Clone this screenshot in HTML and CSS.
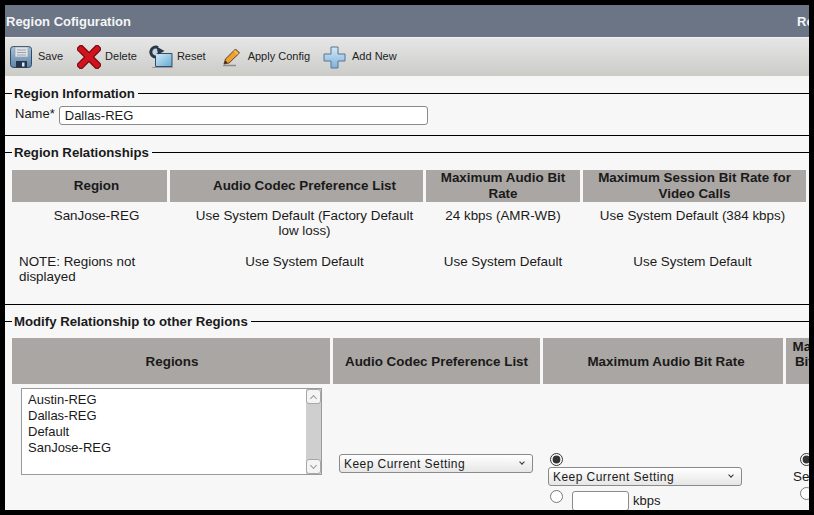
FILE: index.html
```html
<!DOCTYPE html>
<html lang="en">

<head>
    <meta charset="UTF-8">
    <meta name="viewport" content="width=device-width, initial-scale=1.0">
    <title>Region Configuration</title>
    <link rel="stylesheet" href="styles.css">
</head>

<body>

    <div class="frame">
        <div class="title-bar">
            <span class="page-title">Region Cofiguration</span>
            <span class="page-link">Related Links</span>
        </div>

        <div class="toolbar">
            <a class="tool tool-save">
                <svg width="22" height="22" viewBox="0 0 22 22">
                    <defs>
                        <linearGradient id="diskBody" x1="0" y1="0" x2="0" y2="1">
                            <stop offset="0" stop-color="#a9c1d8" />
                            <stop offset="1" stop-color="#5f84a8" />
                        </linearGradient>
                    </defs>
                    <rect x="0.5" y="0.5" width="21" height="21" rx="3" fill="url(#diskBody)" stroke="#2f4a66" />
                    <rect x="5" y="1" width="13" height="10" fill="#dfe2e5" stroke="#8c99a6" stroke-width="0.6" />
                    <path d="M7 4h9M7 6.500h9M7 9h9" stroke="#9aa5b0" stroke-width="1" />
                    <rect x="6" y="15" width="11" height="6.500" fill="#26364a" />
                    <rect x="12" y="16.500" width="2.500" height="4" fill="#dfe6ec" />
                </svg>
                <span>Save</span>
            </a>
            <a class="tool tool-delete">
                <svg width="24" height="24" viewBox="0 0 24 24">
                    <path d="M4 4L20 20M20 4L4 20" stroke="#7d0a12" stroke-width="7.500" stroke-linecap="square" />
                    <path d="M4 4L20 20M20 4L4 20" stroke="#cf1420" stroke-width="5" stroke-linecap="square" />
                </svg>
                <span>Delete</span>
            </a>
            <a class="tool tool-reset">
                <svg width="24" height="24" viewBox="0 0 24 24">
                    <defs>
                        <linearGradient id="resetBox" x1="0" y1="0" x2="1" y2="1">
                            <stop offset="0" stop-color="#d3ecf8" />
                            <stop offset="1" stop-color="#62a9d6" />
                        </linearGradient>
                    </defs>
                    <path d="M3 22.500H24" stroke="#9a9a9a" stroke-width="1" />
                    <path d="M6.500 8.500H23V21.500H6.500Z" fill="url(#resetBox)" stroke="#3a4d60" />
                    <path d="M9 2.500A5 5 0 1 0 7 12" fill="#c8d2da" stroke="#26384a" stroke-width="3" />
                    <path d="M7.500 1.500L15.500 6L9 9.500Z" fill="#26384a" />
                </svg>
                <span>Reset</span>
            </a>
            <a class="tool tool-apply">
                <svg width="20" height="20" viewBox="0 0 20 20">
                    <path d="M1 18.500H14" stroke="#8d8d8d" stroke-width="1.500" />
                    <path d="M2 17L3.500 12L13.500 2L17.500 6L7 16Z" fill="#f0a030" stroke="#5b4320" stroke-width="1" />
                    <path d="M12 3.500L16 7.500" stroke="#fbe0a0" stroke-width="1" />
                    <path d="M2 17L3.500 13.500L5.500 15.500Z" fill="#3a2a14" />
                </svg>
                <span>Apply Config</span>
            </a>
            <a class="tool tool-add">
                <svg width="23" height="23" viewBox="0 0 23 23">
                    <defs>
                        <linearGradient id="plusFill" x1="0" y1="0" x2="0" y2="1">
                            <stop offset="0" stop-color="#d4e8f6" />
                            <stop offset="1" stop-color="#7fb2dc" />
                        </linearGradient>
                    </defs>
                    <path d="M8 1H15V8H22V15H15V22H8V15H1V8H8Z" fill="url(#plusFill)" stroke="#5a7590" />
                </svg>
                <span>Add New</span>
            </a>
        </div>

        <div class="content">
            <section class="block block-info">
                <fieldset>
                    <legend>Region Information</legend>
                    <div class="name-row">
                        <label for="regionName">Name*</label>
                        <input id="regionName" class="name-input" type="text" value="Dallas-REG">
                    </div>
                </fieldset>
            </section>

            <section class="block block-rel">
                <fieldset>
                    <legend>Region Relationships</legend>
                    <table class="grid grid-rel">
                        <colgroup>
                            <col class="rel-a">
                            <col class="rel-b">
                            <col class="rel-c">
                            <col class="rel-d">
                        </colgroup>
                        <tr>
                            <th class="th-region">Region</th>
                            <th class="th-codec">Audio Codec Preference List</th>
                            <th>Maximum Audio Bit Rate</th>
                            <th>Maximum Session Bit Rate for Video Calls</th>
                        </tr>
                        <tr>
                            <td class="td-region">SanJose-REG</td>
                            <td class="td-codec">Use System Default (Factory Default low loss)</td>
                            <td>24 kbps (AMR-WB)</td>
                            <td class="td-session">Use System Default (384 kbps)</td>
                        </tr>
                        <tr>
                            <td class="note">NOTE: Regions not displayed</td>
                            <td class="td-codec">Use System Default</td>
                            <td>Use System Default</td>
                            <td class="td-session">Use System Default</td>
                        </tr>
                    </table>
                </fieldset>
            </section>

            <section class="block-modify">
                <fieldset>
                    <legend>Modify Relationship to other Regions</legend>
                    <table class="grid grid-mod">
                        <colgroup>
                            <col class="mod-a">
                            <col class="mod-b">
                            <col class="mod-c">
                            <col class="mod-d">
                        </colgroup>
                        <tr>
                            <th class="th-one th-regions">Regions</th>
                            <th class="th-one">Audio Codec Preference List</th>
                            <th class="th-one th-rate">Maximum Audio Bit Rate</th>
                            <th class="th-session">Maximum Session Bit Rate for Video Calls</th>
                        </tr>
                        <tr>
                            <td class="cell-list">
                                <div class="listbox">
                                    <ul>
                                        <li>Austin-REG</li>
                                        <li>Dallas-REG</li>
                                        <li>Default</li>
                                        <li>SanJose-REG</li>
                                    </ul>
                                    <div class="scrollbar">
                                        <span class="scroll-btn scroll-up"></span>
                                        <span class="scroll-track"></span>
                                        <span class="scroll-btn scroll-down"></span>
                                    </div>
                                </div>
                            </td>
                            <td class="cell-codec">
                                <span class="select-wrap">
                                    <select>
                                        <option>Keep Current Setting</option>
                                    </select>
                                </span>
                            </td>
                            <td class="cell-rate">
                                <input class="radio" type="radio" name="audio" checked>
                                <span class="select-wrap">
                                    <select>
                                        <option>Keep Current Setting</option>
                                    </select>
                                </span>
                                <div class="kbps-row">
                                    <input class="radio" type="radio" name="audio">
                                    <input class="kbps-input" type="text">
                                    <span>kbps</span>
                                </div>
                            </td>
                            <td class="cell-rate cell-video">
                                <input class="radio" type="radio" name="video" checked>
                                <div class="cut-label">Session Default</div>
                                <input class="radio" type="radio" name="video">
                            </td>
                        </tr>
                    </table>
                </fieldset>
            </section>
        </div>
    </div>

</body>

</html>
```

FILE: styles.css
```css
* {
    box-sizing: border-box;
    font-family: "Liberation Sans", Arial, sans-serif;
}

body {
    margin: 0;
    background: #000;
}

.frame {
    width: 814px;
    height: 515px;
    border: 5px solid #000;
    overflow: hidden;
    background: #f7f7f7;
    color: #1a1a1a;
}

/* header */
.title-bar {
    display: flex;
    justify-content: space-between;
    align-items: center;
    height: 32px;
    padding-left: 1px;
    background: #6b7585;
    color: #f4f5f7;
    font-size: 13px;
    font-weight: bold;
}

.page-link {
    width: 12px;
    overflow: hidden;
    white-space: nowrap;
    flex: none;
}

.toolbar {
    display: flex;
    align-items: center;
    height: 39px;
    padding-left: 5px;
    border-top: 1px solid #f2f2f2;
    background: linear-gradient(#e6e6e6, #cbcbc8);
    font-size: 11px;
    color: #222;
}

.tool {
    display: flex;
    align-items: center;
    gap: 6px;
}

.tool svg {
    display: block;
}

.tool span {
    margin-bottom: 2px;
}

.tool-delete {
    margin-left: 14px;
    gap: 4px;
}

.tool-reset {
    margin-left: 12px;
    gap: 4px;
}

.tool-apply {
    margin-left: 16px;
}

.tool-add {
    margin-left: 13px;
}

/* sections */
fieldset {
    min-width: 0;
    margin: 0;
    padding: 0;
    border: 0;
    border-top: 1px solid #000;
}

legend {
    margin-left: 7px;
    padding: 0 3px 0 2px;
    font-size: 13.2px;
    font-weight: bold;
    color: #1a1a1a;
}

.block {
    border-bottom: 1px solid #000;
}

.block-info {
    height: 60px;
    padding-top: 10px;
}

.block-rel {
    height: 169px;
    padding-top: 9px;
}

.block-modify {
    padding-top: 9px;
}

.name-row {
    display: flex;
    align-items: flex-start;
    gap: 4px;
    margin-top: 5px;
    padding-left: 10px;
    font-size: 13px;
}

.name-input {
    width: 369px;
    height: 19px;
    padding: 0 5px;
    border: 1px solid #8a8a8a;
    border-radius: 3px;
    background: #fff;
    font-size: 13px;
    color: #1a1a1a;
}

/* tables */
.grid {
    table-layout: fixed;
    border-collapse: separate;
    border-spacing: 3px;
    margin-left: 4px;
    font-size: 13.4px;
}

.grid th {
    padding: 0;
    background: #a9a6a3;
    font-size: 13.4px;
    line-height: 16px;
    color: #1a1a1a;
}

.grid td {
    padding: 0;
    text-align: center;
    vertical-align: top;
    line-height: 15px;
}

.grid-rel {
    width: 800px;
    margin-top: 7px;
}

.grid-rel th {
    height: 31px;
}

.grid-rel th.th-region {
    padding-left: 14px;
}

.grid-rel th.th-codec {
    padding-left: 16px;
}

.grid-rel td {
    padding: 3px 10px 10px;
}

.grid-rel td.td-region {
    padding-left: 24px;
}

.grid-rel td.td-codec {
    padding-left: 20px;
    padding-right: 4px;
}

.grid-rel td.td-session {
    padding-right: 14px;
}

.grid-rel td.note {
    padding-left: 7px;
    text-align: left;
}

.rel-a { width: 155px; }
.rel-b { width: 253px; }
.rel-c { width: 154px; }
.rel-d { width: 223px; }

.grid-mod {
    width: 910px;
    margin-top: 6px;
}

.grid-mod th {
    height: 46px;
}

.grid-mod th.th-one {
    padding-top: 2px;
}

.grid-mod th.th-regions {
    padding-left: 2px;
}

.grid-mod th.th-rate {
    padding-left: 6px;
}

.grid-mod th.th-session {
    line-height: 15px;
}

.mod-a { width: 318px; }
.mod-b { width: 207px; }
.mod-c { width: 240px; }
.mod-d { width: 130px; }

/* list box */
.cell-list {
    padding: 1px 0 0 9px !important;
}

.listbox {
    display: flex;
    width: 301px;
    height: 87px;
    border: 1px solid #9a9a9a;
    background: #fff;
}

.listbox ul {
    flex: 1;
    margin: 0;
    padding: 3px 0 0 6px;
    list-style: none;
    text-align: left;
    font-size: 13px;
    line-height: 16px;
    color: #1a1a1a;
}

.scrollbar {
    display: flex;
    flex-direction: column;
    width: 15px;
    background: #cfcfcf;
}

.scroll-track {
    flex: 1;
}

.scroll-btn {
    display: flex;
    align-items: center;
    justify-content: center;
    height: 15px;
    border: 1px solid #a8a8a8;
    border-radius: 3px;
    background: #f4f4f4;
}

.scroll-btn::after {
    content: "";
    width: 4px;
    height: 4px;
    border-right: 1px solid #9a9a9a;
    border-bottom: 1px solid #9a9a9a;
}

.scroll-up::after {
    margin-top: 3px;
    transform: rotate(-135deg);
}

.scroll-down::after {
    margin-bottom: 3px;
    transform: rotate(45deg);
}

/* form controls */
.select-wrap {
    position: relative;
    display: block;
    width: 194px;
    height: 19px;
}

.select-wrap::after {
    content: "";
    position: absolute;
    top: 6px;
    right: 9px;
    width: 3px;
    height: 3px;
    border-right: 1px solid #333;
    border-bottom: 1px solid #333;
    transform: rotate(45deg);
}

.select-wrap select {
    appearance: none;
    display: block;
    width: 100%;
    height: 100%;
    padding: 0 0 0 4px;
    border: 1px solid #8a8a8a;
    border-radius: 3px;
    background: linear-gradient(#fff, #e6e6e6);
    font-size: 12px;
    letter-spacing: 0.45px;
    color: #1a1a1a;
}

.cell-codec {
    padding: 67px 0 0 6px !important;
}

.cell-rate {
    padding: 66px 0 0 5px !important;
    text-align: left !important;
}

.radio {
    display: block;
    width: 13px;
    height: 13px;
    margin: 0 0 1px 2px;
    accent-color: #333;
}

.kbps-row {
    display: flex;
    align-items: center;
    gap: 4px;
    margin-top: 4px;
    font-size: 13px;
}

.kbps-row .radio {
    margin-bottom: 8px;
}

.kbps-input {
    width: 57px;
    height: 20px;
    margin-left: 5px;
    border: 1px solid #8a8a8a;
    border-radius: 3px;
    background: #fff;
}

.cell-video {
    padding-left: 7px !important;
}

.cell-video .radio {
    margin-left: 7px;
}

.cut-label {
    height: 20px;
    line-height: 20px;
    white-space: nowrap;
}
```
